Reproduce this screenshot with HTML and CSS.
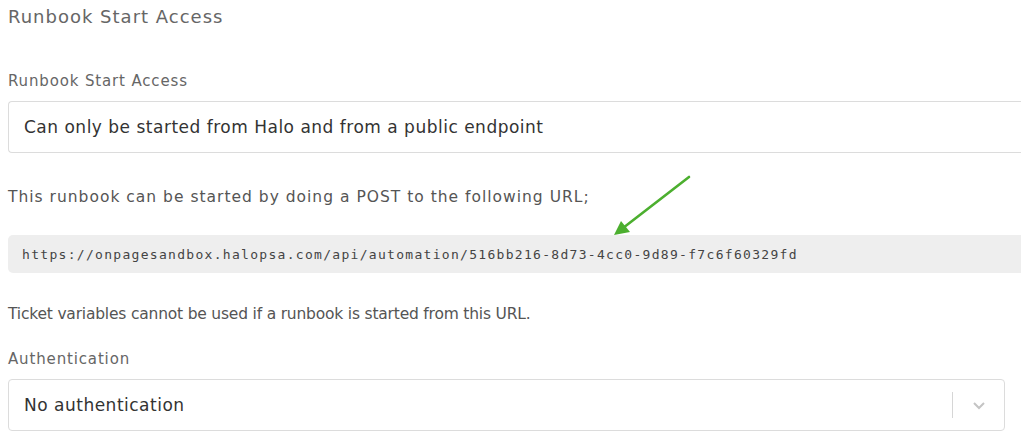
FILE: index.html
```html
<!DOCTYPE html>
<html lang="en">
<head>
    <meta charset="UTF-8" />
    <title>Runbook Start Access</title>
    <link rel="stylesheet" href="styles.css">
</head>
<body>

<div class="panel">
    <h3 class="section-title">Runbook Start Access</h3>

    <label class="field-label" for="start-access">Runbook Start Access</label>
    <div class="text-field" id="start-access">Can only be started from Halo and from a public endpoint</div>

    <p class="note note-url">This runbook can be started by doing a POST to the following URL;</p>

    <div class="url-wrap">
        <pre class="url-box">https://onpagesandbox.halopsa.com/api/automation/516bb216-8d73-4cc0-9d89-f7c6f60329fd</pre>
        <!-- annotation arrow -->
        <svg class="pointer" width="90" height="70" viewBox="0 0 90 70">
            <line x1="80" y1="5" x2="14" y2="56" stroke="#4caf2f" stroke-width="2.6" stroke-linecap="round" />
            <polygon points="5,63 12,49 21,60" fill="#4caf2f" />
        </svg>
    </div>

    <p class="note note-ticket">Ticket variables cannot be used if a runbook is started from this URL.</p>

    <label class="field-label" for="auth">Authentication</label>
    <div class="select-field" id="auth">
        <span class="select-value">No authentication</span>
        <span class="select-sep"></span>
        <svg class="select-chevron" width="14" height="10" viewBox="0 0 14 10">
            <path d="M2 3 L7 8 L12 3" fill="none" stroke="#c4c4c4" stroke-width="2" />
        </svg>
    </div>
</div>

</body>
</html>
```

FILE: styles.css
```css
body {
    margin: 0;
    background: #fff;
    font-family: "DejaVu Sans", Arial, sans-serif;
    color: #5f5f5f;
    overflow: hidden;
}
.panel {
    padding: 4px 0 0 8px;
    width: 1013px;
}
.section-title {
    margin: 0;
    font-size: 18px;
    font-weight: 400;
    line-height: 26px;
    letter-spacing: 1px;
    color: #666;
}
.field-label {
    display: block;
    font-size: 15px;
    line-height: 22px;
    letter-spacing: 0.85px;
    color: #666;
}
.section-title + .field-label {
    margin-top: 40px;
}
.text-field {
    margin-top: 9px;
    height: 52px;
    box-sizing: border-box;
    border: 1px solid #dcdcdc;
    border-right: none;
    border-radius: 4px 0 0 4px;
    padding: 0 0 0 15px;
    display: flex;
    align-items: center;
    font-size: 17px;
    letter-spacing: 0.5px;
    color: #333;
}
.note {
    margin: 0;
    font-size: 15.5px;
    line-height: 22px;
    color: #555;
}
.note-url {
    margin-top: 33px;
    letter-spacing: 1px;
}
.url-wrap {
    position: relative;
    margin-top: 27px;
}
.url-box {
    margin: 0;
    height: 38px;
    box-sizing: border-box;
    background: #eeeeee;
    border-radius: 5px 0 0 5px;
    padding: 0 0 0 14px;
    display: flex;
    align-items: center;
    font-family: "DejaVu Sans Mono", monospace;
    font-size: 13px;
    letter-spacing: 1.3px;
    color: #444;
}
.pointer {
    position: absolute;
    left: 601px;
    top: -63px;
}
.note-ticket {
    margin-top: 30px;
    letter-spacing: -0.2px;
}
.note-ticket + .field-label {
    margin-top: 23px;
}
.select-field {
    margin-top: 9px;
    width: 997px;
    height: 52px;
    box-sizing: border-box;
    border: 1px solid #dcdcdc;
    border-radius: 4px;
    padding: 0 0 0 15px;
    display: flex;
    align-items: center;
}
.select-value {
    flex: 1;
    font-size: 17px;
    letter-spacing: 0.5px;
    color: #333;
}
.select-sep {
    width: 1px;
    height: 26px;
    background: #d6d6d6;
}
.select-chevron {
    margin: 0 18px 0 19px;
}
```
